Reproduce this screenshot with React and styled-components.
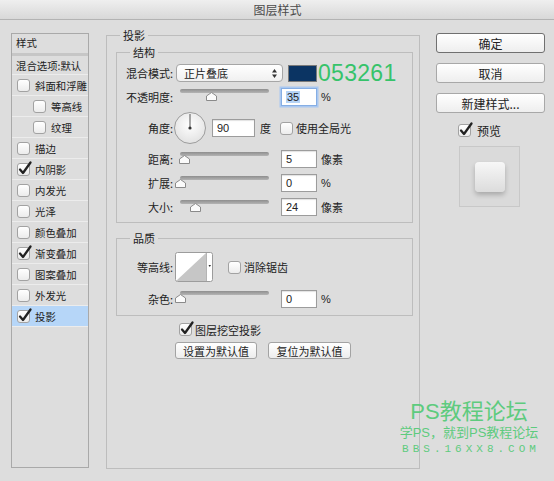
import React from 'react';
import styled, { createGlobalStyle } from 'styled-components';

const Global = createGlobalStyle`
  * { box-sizing: border-box; }
  html, body { margin: 0; padding: 0; background: #dddddd; }
  body {
    font-family: "Noto Sans CJK SC", "Noto Sans", sans-serif;
    font-size: 11px;
    color: #222;
  }
`;

const Window = styled.div`
  width: 554px;
  height: 481px;
  position: relative;
  overflow: hidden;
  background: #dddddd;
`;

const TitleBar = styled.div`
  height: 20px;
  border-bottom: 1px solid #b3b3b3;
  background: linear-gradient(#efefef, #d8d8d8);
  display: flex;
  align-items: center;
  justify-content: center;
  font-size: 12px;
  color: #4a4a4a;
  padding-left: 1px;
`;

const Content = styled.div`
  display: flex;
  align-items: flex-start;
  padding: 8px 0 0 11px;
`;

/* ---------- left list ---------- */
const LeftPanel = styled.div`
  margin-top: 5px;
  width: 78px;
  height: 435px;
  border: 1px solid #a9a9a9;
  display: flex;
  flex-direction: column;
  font-size: 10.4px;
  white-space: nowrap;
`;

const ListHeader = styled.div`
  height: 22px;
  border-bottom: 3px solid #c6c6c6;
  padding: 1px 0 0 4px;
  line-height: 15px;
`;

const BlendRow = styled.div`
  height: 19px;
  border-bottom: 1px solid #ececec;
  padding-left: 4px;
  display: flex;
  align-items: center;
`;

const ListRow = styled.div`
  height: 21px;
  border-bottom: 1px solid #ececec;
  padding-left: ${p => (p.$indent ? 21 : 5)}px;
  display: flex;
  align-items: center;
  gap: 5px;
  background: ${p => (p.$selected ? '#b6d6f8' : 'transparent')};
`;

/* ---------- checkbox ---------- */
const BoxWrap = styled.span`
  position: relative;
  flex: none;
  width: 13px;
  height: 13px;
  border: 1px solid #a2a2a2;
  border-radius: 3px;
  background: linear-gradient(#ffffff, #ececec);
  margin-left: ${p => p.$ml || 0}px;
`;

const CheckSvg = styled.svg`
  position: absolute;
  left: 0px;
  top: -2px;
  overflow: visible;
`;

const CheckBox = ({ checked, ml }) => (
  <BoxWrap $ml={ml}>
    {checked && (
      <CheckSvg width="13" height="13" viewBox="0 0 13 13">
        <path d="M2 7.5 L5 11 L12.5 0.5" fill="none" stroke="#222" strokeWidth="2.3" strokeLinecap="round" strokeLinejoin="round" />
      </CheckSvg>
    )}
  </BoxWrap>
);

/* ---------- fieldsets ---------- */
const Fieldset = styled.fieldset`
  margin: ${p => p.$mt || 0}px 0 0 ${p => p.$ml || 0}px;
  padding: ${p => p.$pad};
  border: 1px solid #bdbdbd;
  min-width: 0;
  width: ${p => p.$w}px;
  height: ${p => (p.$h ? `${p.$h}px` : 'auto')};
`;

const Legend = styled.legend`
  padding: 0 3px;
  margin-left: ${p => p.$ml}px;
  font-size: 11px;
  line-height: 14px;
  color: #222;
`;

const FormRow = styled.div`
  display: flex;
  align-items: center;
  height: ${p => p.$h || 18}px;
  margin-top: ${p => p.$mt ?? 6}px;
`;

const Label = styled.span`
  flex: none;
  width: 56px;
  text-align: right;
  white-space: nowrap;
`;

const Select = styled.div`
  margin-left: 3px;
  width: 107px;
  height: 18px;
  border: 1px solid #a6a6a6;
  border-radius: 4px;
  background: linear-gradient(#ffffff, #f0f0f0);
  display: flex;
  align-items: center;
  justify-content: space-between;
  padding: 0 5px 0 7px;
`;

const Swatch = styled.div`
  margin-left: 5px;
  width: 29px;
  height: 17px;
  background: #0b3463;
  border: 1px solid #7b7b7b;
`;

const HexText = styled.span`
  margin-left: 1px;
  font-family: "Liberation Sans", Arial, sans-serif;
  font-size: 23px;
  line-height: 18px;
  color: #36c36a;
  letter-spacing: 0.3px;
`;

const SliderWrap = styled.div`
  position: relative;
  align-self: flex-start;
  flex: none;
  margin-left: 7px;
  width: 89px;
  height: 18px;
`;

const Track = styled.div`
  position: absolute;
  left: 0;
  right: 0;
  top: ${p => p.$top}px;
  height: 4px;
  border-radius: 2px;
  background: linear-gradient(#8e8e8e, #b4b4b4);
`;

const ThumbSvg = styled.svg`
  position: absolute;
  top: ${p => p.$top + 3}px;
  margin-left: -5.5px;
`;

const Slider = ({ pct, top = 1 }) => (
  <SliderWrap>
    <Track $top={top} />
    <ThumbSvg $top={top} width="11" height="9" viewBox="0 0 11 9" style={{ left: `${pct}%` }}>
      <polygon points="5.5,0.5 10.5,4 10.5,8.5 0.5,8.5 0.5,4" fill="#fbfbfb" stroke="#8a8a8a" strokeWidth="1" />
    </ThumbSvg>
  </SliderWrap>
);

const Field = styled.div`
  flex: none;
  margin-left: ${p => p.$ml ?? 12}px;
  width: ${p => p.$w || 36}px;
  height: 18px;
  border: 1px solid ${p => (p.$focus ? '#86aee4' : '#9c9c9c')};
  box-shadow: ${p => (p.$focus ? '0 0 0 1.5px #a9c8f1' : 'inset 0 1px 1px rgba(0,0,0,0.12)')};
  background: #fff;
  padding-left: 4px;
  display: flex;
  align-items: center;
  font-family: "Liberation Sans", Arial, sans-serif;
  font-size: 11px;
`;

const Selected = styled.span`
  background: #b5d3f6;
  padding: 0 1px;
`;

const Unit = styled.span`
  margin-left: ${p => p.$ml ?? 4}px;
  white-space: nowrap;
  font-family: ${p => (p.$latin ? '"Liberation Sans", Arial, sans-serif' : 'inherit')};
`;

const DialSvg = styled.svg`
  flex: none;
  margin-left: 1px;
`;

const Dial = () => (
  <DialSvg width="32" height="32" viewBox="0 0 32 32">
    <defs>
      <radialGradient id="dialg" cx="50%" cy="40%" r="60%">
        <stop offset="0%" stopColor="#ffffff" />
        <stop offset="100%" stopColor="#e2e2e2" />
      </radialGradient>
    </defs>
    <circle cx="16" cy="16" r="15.5" fill="url(#dialg)" stroke="#9c9c9c" />
    <line x1="16" y1="16" x2="16" y2="2" stroke="#555" strokeWidth="1" />
    <circle cx="16" cy="16" r="1.6" fill="#333" />
  </DialSvg>
);

const ContourSvg = styled.svg`
  flex: none;
  margin-left: 2px;
`;

const Contour = () => (
  <ContourSvg width="38" height="30" viewBox="0 0 38 30">
    <rect x="0.5" y="0.5" width="37" height="29" rx="2" fill="#ffffff" stroke="#9c9c9c" />
    <polygon points="1,29 31,1 31,29" fill="#c6c6c6" />
    <line x1="31.5" y1="1" x2="31.5" y2="29" stroke="#b4b4b4" />
    <polygon points="33.5,13 36,13 34.75,15" fill="#333" />
  </ContourSvg>
);

const SelectArrows = () => (
  <svg width="5" height="9" viewBox="0 0 5 9">
    <polygon points="2.5,0 5,3.5 0,3.5" fill="#333" />
    <polygon points="2.5,9 5,5.5 0,5.5" fill="#333" />
  </svg>
);

const Text = styled.span`
  margin-left: ${p => p.$ml ?? 3}px;
  white-space: nowrap;
`;

const BottomCheckRow = styled.div`
  display: flex;
  align-items: center;
  height: 13px;
  margin-top: 7px;
  padding-left: 63px;
`;

const ButtonRow = styled.div`
  display: flex;
  gap: 11px;
  margin-top: 6px;
  padding-left: 59px;
`;

const SmallButton = styled.div`
  width: ${p => p.$w}px;
  height: 17px;
  border: 1px solid #a3a3a3;
  border-radius: 3px;
  background: linear-gradient(#ffffff, #ededed);
  display: flex;
  align-items: center;
  justify-content: center;
  font-size: 11px;
`;

/* ---------- right column ---------- */
const RightCol = styled.div`
  margin: 5px 0 0 16px;
  width: 109px;
  display: flex;
  flex-direction: column;
  gap: 10px;
`;

const Button = styled.div`
  height: 20px;
  border: ${p => (p.$default ? '1.5px solid #707070' : '1px solid #a8a8a8')};
  border-radius: 3px;
  background: linear-gradient(#ffffff, #eeeeee);
  display: flex;
  align-items: center;
  justify-content: center;
  font-size: 12px;
  color: #222;
`;

const PreviewCheck = styled.div`
  display: flex;
  align-items: center;
  height: 13px;
  margin-top: 1px;
  padding-left: 22px;
  font-size: 12px;
`;

const PreviewBox = styled.div`
  margin: -1px 0 0 23px;
  width: 61px;
  height: 61px;
  border: 1px solid #c8c8c8;
  background: #dadada;
  display: flex;
  align-items: center;
  justify-content: center;
`;

const PreviewTile = styled.div`
  width: 30px;
  height: 30px;
  border-radius: 4px;
  background: linear-gradient(#f7f7f7, #dcdcdc);
  box-shadow: 0 3px 5px rgba(0, 0, 0, 0.22);
`;

/* ---------- watermark ---------- */
const Watermark = styled.div`
  position: absolute;
  left: 398px;
  top: 399px;
  width: 142px;
  display: flex;
  flex-direction: column;
  align-items: center;
  color: #5ecb7e;
`;

const WmTitle = styled.div`
  font-size: 22px;
  line-height: 26px;
  font-family: "Liberation Sans", "Noto Sans CJK SC", sans-serif;
`;

const WmSub = styled.div`
  font-size: 13px;
  line-height: 16px;
  font-family: "Liberation Sans", "Noto Sans CJK SC", sans-serif;
`;

const WmUrl = styled.div`
  font-size: 11px;
  line-height: 16px;
  font-family: "Liberation Mono", monospace;
  letter-spacing: 4px;
  margin-right: -4px;
`;

const listItems = [
  { t: '斜面和浮雕', c: false },
  { t: '等高线', c: false, i: true },
  { t: '纹理', c: false, i: true },
  { t: '描边', c: false },
  { t: '内阴影', c: true },
  { t: '内发光', c: false },
  { t: '光泽', c: false },
  { t: '颜色叠加', c: false },
  { t: '渐变叠加', c: true },
  { t: '图案叠加', c: false },
  { t: '外发光', c: false },
  { t: '投影', c: true, s: true },
];

export default function App() {
  return (
    <Window>
      <Global />
      <TitleBar>图层样式</TitleBar>
      <Content>
        <LeftPanel>
          <ListHeader>样式</ListHeader>
          <BlendRow>混合选项:默认</BlendRow>
          {listItems.map(it => (
            <ListRow key={it.t} $indent={it.i} $selected={it.s}>
              <CheckBox checked={it.c} />
              <span>{it.t}</span>
            </ListRow>
          ))}
        </LeftPanel>

        <Fieldset $ml={17} $w={314} $h={441} $pad="0 6px 0 9px">
          <Legend $ml={4}>投影</Legend>

          <Fieldset $mt={3} $w={297} $pad="5px 0 6px 0">
            <Legend $ml={13}>结构</Legend>
            <FormRow $mt={0}>
              <Label>混合模式:</Label>
              <Select>
                <span>正片叠底</span>
                <SelectArrows />
              </Select>
              <Swatch />
              <HexText>053261</HexText>
            </FormRow>
            <FormRow>
              <Label>不透明度:</Label>
              <Slider pct={35} top={1} />
              <Field $focus>
                <Selected>35</Selected>
              </Field>
              <Unit $latin>%</Unit>
            </FormRow>
            <FormRow $h={32}>
              <Label>角度:</Label>
              <Dial />
              <Field $ml={6} $w={43}>90</Field>
              <Unit $ml={5}>度</Unit>
              <CheckBox ml={9} />
              <Text>使用全局光</Text>
            </FormRow>
            <FormRow>
              <Label>距离:</Label>
              <Slider pct={5} top={2} />
              <Field>5</Field>
              <Unit>像素</Unit>
            </FormRow>
            <FormRow>
              <Label>扩展:</Label>
              <Slider pct={0} top={2} />
              <Field>0</Field>
              <Unit $latin>%</Unit>
            </FormRow>
            <FormRow>
              <Label>大小:</Label>
              <Slider pct={17} top={2} />
              <Field>24</Field>
              <Unit>像素</Unit>
            </FormRow>
          </Fieldset>

          <Fieldset $mt={8} $w={297} $pad="7px 0 7px 0">
            <Legend $ml={13}>品质</Legend>
            <FormRow $mt={0} $h={30}>
              <Label>等高线:</Label>
              <Contour />
              <CheckBox ml={15} />
              <Text>消除锯齿</Text>
            </FormRow>
            <FormRow $mt={8}>
              <Label>杂色:</Label>
              <Slider pct={0} top={1} />
              <Field>0</Field>
              <Unit $latin>%</Unit>
            </FormRow>
          </Fieldset>

          <BottomCheckRow>
            <CheckBox checked />
            <Text>图层挖空投影</Text>
          </BottomCheckRow>
          <ButtonRow>
            <SmallButton $w={82}>设置为默认值</SmallButton>
            <SmallButton $w={83}>复位为默认值</SmallButton>
          </ButtonRow>
        </Fieldset>

        <RightCol>
          <Button $default>确定</Button>
          <Button>取消</Button>
          <Button>新建样式...</Button>
          <PreviewCheck>
            <CheckBox checked />
            <Text $ml={6}>预览</Text>
          </PreviewCheck>
          <PreviewBox>
            <PreviewTile />
          </PreviewBox>
        </RightCol>
      </Content>

      <Watermark>
        <WmTitle>PS教程论坛</WmTitle>
        <WmSub>学PS，就到PS教程论坛</WmSub>
        <WmUrl>BBS.16XX8.COM</WmUrl>
      </Watermark>
    </Window>
  );
}
